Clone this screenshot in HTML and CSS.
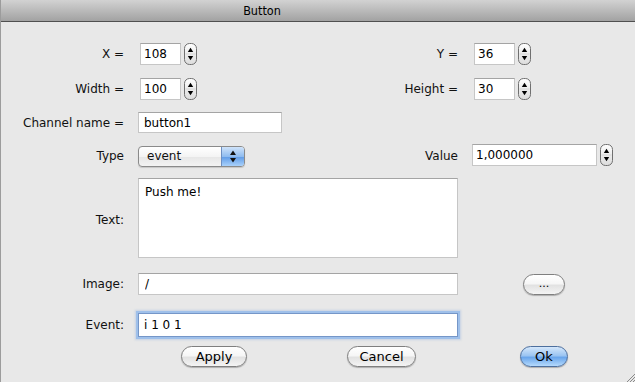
FILE: index.html
```html
<!DOCTYPE html>
<html lang="en">
<head>
  <meta charset="UTF-8">
  <title>Button</title>
  <link rel="stylesheet" href="styles.css">
</head>
<body>

  <div class="window">
    <div class="titlebar">Button</div>

    <form class="form">
      <div class="row row-pos">
        <label class="lbl">X =</label>
        <div class="pair">
          <span class="spin"><input class="box num" type="text" value="108"><svg class="stepper" width="14" height="22" viewBox="0 0 14 22"><use href="#stepper"/></svg></span>
          <label class="lbl lbl-right">Y =</label>
        </div>
        <span class="spin"><input class="box num" type="text" value="36"><svg class="stepper" width="14" height="22" viewBox="0 0 14 22"><use href="#stepper"/></svg></span>
      </div>

      <div class="row row-size">
        <label class="lbl">Width =</label>
        <div class="pair">
          <span class="spin"><input class="box num" type="text" value="100"><svg class="stepper" width="14" height="22" viewBox="0 0 14 22"><use href="#stepper"/></svg></span>
          <label class="lbl lbl-right">Height =</label>
        </div>
        <span class="spin"><input class="box num" type="text" value="30"><svg class="stepper" width="14" height="22" viewBox="0 0 14 22"><use href="#stepper"/></svg></span>
      </div>

      <div class="row row-channel">
        <label class="lbl">Channel name =</label>
        <div><input class="box channel" type="text" value="button1"></div>
      </div>

      <div class="row row-type">
        <label class="lbl">Type</label>
        <div class="pair">
          <div class="popup">
            <span class="popup-text">event</span>
            <span class="popup-arrows">
              <svg width="22" height="19" viewBox="0 0 22 19">
                <polygon points="8,8 14,8 11,3.5" fill="#111"/>
                <polygon points="8,11 14,11 11,15.5" fill="#111"/>
              </svg>
            </span>
          </div>
          <label class="lbl lbl-right">Value</label>
        </div>
        <span class="spin"><input class="box value" type="text" value="1,000000"><svg class="stepper" width="14" height="22" viewBox="0 0 14 22"><use href="#stepper"/></svg></span>
      </div>

      <div class="row row-text">
        <label class="lbl">Text:</label>
        <textarea class="box text">Push me!</textarea>
      </div>

      <div class="row row-image">
        <label class="lbl">Image:</label>
        <input class="box wide" type="text" value="/">
        <div><button type="button" class="aqua browse">...</button></div>
      </div>

      <div class="row row-event">
        <label class="lbl">Event:</label>
        <input class="box wide focused" type="text" value="i 1 0 1">
      </div>

      <div class="row row-buttons">
        <span></span>
        <div class="left-buttons">
          <button type="button" class="aqua apply">Apply</button>
          <button type="button" class="aqua cancel">Cancel</button>
        </div>
        <div><button type="button" class="aqua default">Ok</button></div>
      </div>
    </form>

    <svg class="grip" width="9" height="9" viewBox="0 0 9 9">
      <path d="M9 1 L1 9 M9 4 L4 9 M9 7 L7 9" stroke="#8a8a8a" stroke-width="1"/>
    </svg>
  </div>

  <svg width="0" height="0" style="position:absolute">
    <defs>
      <linearGradient id="stepGrad" x1="0" y1="0" x2="0" y2="1">
        <stop offset="0" stop-color="#ffffff"/>
        <stop offset="0.5" stop-color="#ececec"/>
        <stop offset="1" stop-color="#dcdcdc"/>
      </linearGradient>
      <g id="stepper">
        <rect x="0.5" y="0.5" width="12" height="21" rx="5" fill="url(#stepGrad)" stroke="#707070"/>
        <line x1="1.5" y1="11" x2="11.5" y2="11" stroke="#d6d6d6"/>
        <polygon points="3.8,9 9.2,9 6.5,4.8" fill="#000"/>
        <polygon points="3.8,13 9.2,13 6.5,17.2" fill="#000"/>
      </g>
    </defs>
  </svg>

</body>
</html>
```

FILE: styles.css
```css
body {
  margin: 0;
  width: 635px;
  height: 382px;
  overflow: hidden;
  background: #e8e8e8;
  font-family: "DejaVu Sans", "Liberation Sans", sans-serif;
  font-size: 12px;
  color: #111;
}

.window {
  position: relative;
  height: 382px;
  border-left: 1px solid #9c9c9c;
  box-sizing: border-box;
  background: #e8e8e8;
}

.titlebar {
  height: 21px;
  border-bottom: 1px solid #505050;
  background: linear-gradient(#d2d2d2, #a2a2a2);
  display: flex;
  align-items: center;
  justify-content: center;
  padding-right: 112px;
  font-family: "DejaVu Sans Condensed", "DejaVu Sans", sans-serif;
  font-size: 12.5px;
  color: #000;
}

.form {
  padding-top: 21px;
}

.row {
  display: grid;
  grid-template-columns: 123px 320px 1fr;
  column-gap: 14px;
  align-items: center;
}

.row-size { margin-top: 13px; }
.row-channel { margin-top: 12px; }
.row-type { margin-top: 11px; height: 23px; }
.row-text { margin-top: 11px; }
.row-image { margin-top: 15px; }
.row-event { margin-top: 18px; }
.row-buttons { margin-top: 9px; }

.lbl {
  text-align: right;
  white-space: nowrap;
}

.pair {
  display: flex;
  align-items: center;
  justify-content: space-between;
}

.spin {
  display: flex;
  align-items: center;
  gap: 3px;
}

.box {
  box-sizing: border-box;
  height: 22px;
  margin: 0;
  padding: 0 3px;
  border: 1px solid #c6c6c6;
  border-top-color: #a4a4a4;
  background: #fff;
  font-family: inherit;
  font-size: 12px;
  color: #000;
  outline: none;
}

.num {
  width: 41px;
  margin-left: 1px;
}

.row .num:first-child {
  margin-left: 2px;
}

.channel {
  width: 144px;
  height: 21px;
  padding-left: 5px;
}

.value {
  width: 125px;
  padding-left: 3px;
}

.row-type .spin {
  align-self: start;
}

.popup {
  box-sizing: border-box;
  width: 107px;
  height: 21px;
  margin-top: 2px;
  display: flex;
  border: 1px solid #8a8a8a;
  border-radius: 4px;
  overflow: hidden;
  background: linear-gradient(#ffffff, #f4f4f4 50%, #e6e6e6 51%, #f3f3f3);
  box-shadow: 0 1px 1px rgba(0, 0, 0, 0.15);
}

.popup-text {
  flex: 1;
  padding-left: 8px;
  line-height: 19px;
}

.popup-arrows {
  width: 22px;
  height: 19px;
  border-left: 1px solid #6d8fc2;
  background: linear-gradient(#cfe3fa, #8fbcf0 50%, #5e9ae6 51%, #a9d1fb);
}

.text {
  width: 320px;
  height: 80px;
  padding: 6px 6px;
  resize: none;
  line-height: 14px;
}

.row-text .lbl {
  padding-top: 4px;
}

.wide {
  width: 320px;
  height: 22px;
  padding-left: 6px;
}

.focused {
  height: 24px;
  border: 1px solid #7596c8;
  box-shadow: 0 0 0 2px #9fc0ea, 0 0 2px 3px rgba(120, 160, 220, 0.3);
  padding-left: 5px;
}

.aqua {
  box-sizing: border-box;
  height: 21px;
  padding: 0;
  border: 1px solid #7f7f7f;
  border-radius: 11px;
  background: linear-gradient(#ffffff, #f6f6f6 45%, #e2e2e2 55%, #f4f4f4);
  box-shadow: 0 1px 1px rgba(0, 0, 0, 0.25);
  font-family: inherit;
  font-size: 13px;
  color: #000;
  cursor: pointer;
}

.browse {
  width: 42px;
  margin-left: 51px;
  font-size: 11px;
  line-height: 15px;
  padding-bottom: 2px;
}

.left-buttons {
  display: flex;
}

.apply {
  width: 66px;
  margin-left: 43px;
}

.cancel {
  width: 69px;
  margin-left: 100px;
}

.default {
  width: 48px;
  margin-left: 48px;
  border-color: #4d6f9e;
  background: linear-gradient(#d4e7fb, #9cc5f2 45%, #6aa6ec 55%, #b5dafc);
}

.grip {
  position: absolute;
  right: 0;
  bottom: 0;
}
```
